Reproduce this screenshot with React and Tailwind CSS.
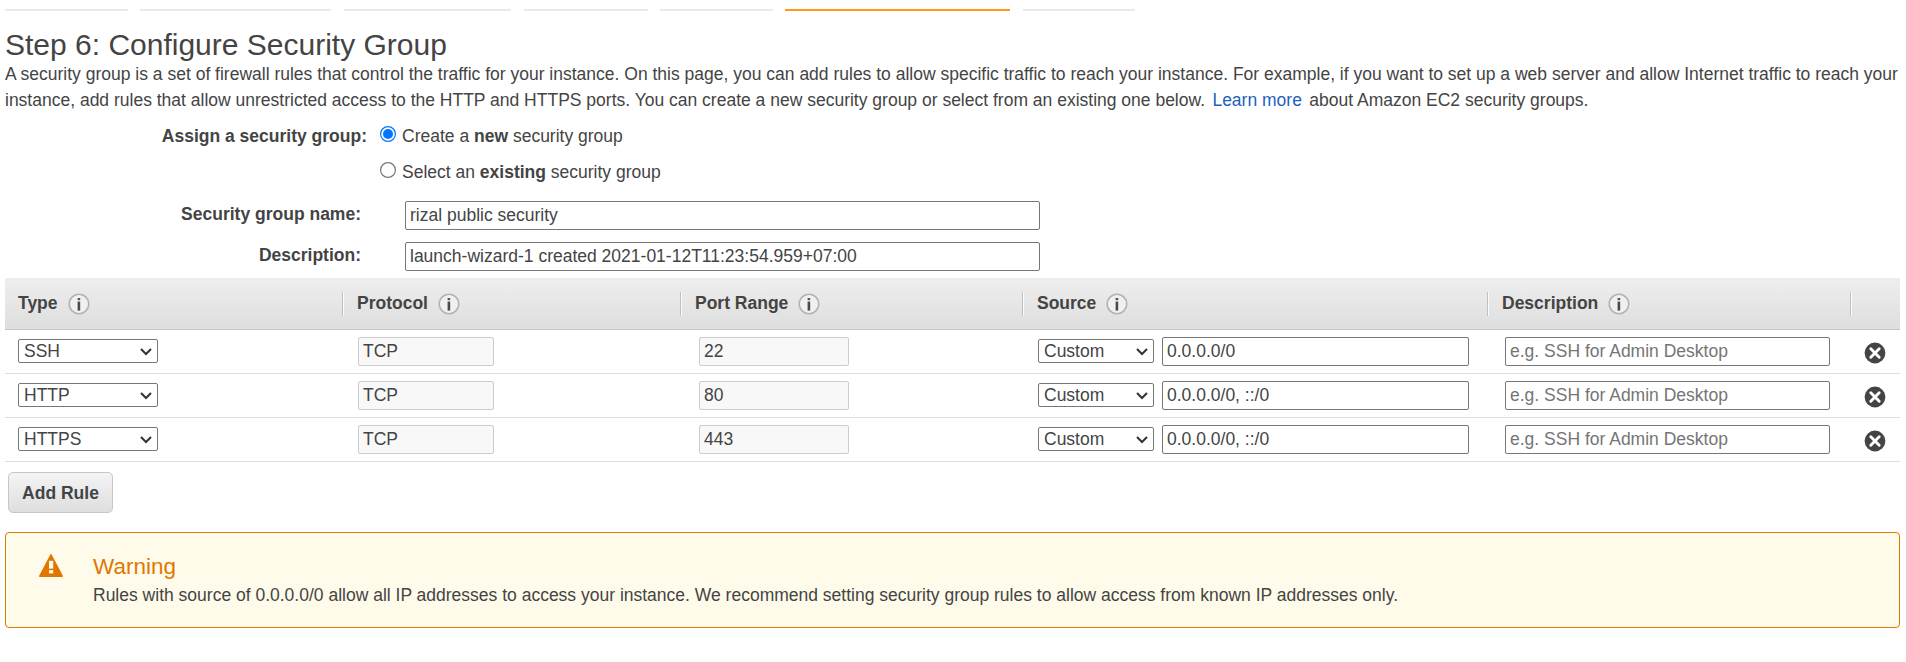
const tabs = [
  { width: 'w-[123px]', gap: 'mr-3' },
  { width: 'w-[191px]', gap: 'mr-[13px]' },
  { width: 'w-[167px]', gap: 'mr-[13px]' },
  { width: 'w-[124px]', gap: 'mr-3' },
  { width: 'w-[113px]', gap: 'mr-3' },
  { width: 'w-[225px]', gap: 'mr-[13px]', active: true },
  { width: 'w-[112px]', gap: '' },
];

const columns = [
  { label: 'Type', pad: 'pl-[13px]' },
  { label: 'Protocol', pad: 'pl-[14px]' },
  { label: 'Port Range', pad: 'pl-[14px]' },
  { label: 'Source', pad: 'pl-[14px]' },
  { label: 'Description', pad: 'pl-[14px]' },
];

const rules = [
  { type: 'SSH', protocol: 'TCP', port: '22', source: '0.0.0.0/0' },
  { type: 'HTTP', protocol: 'TCP', port: '80', source: '0.0.0.0/0, ::/0' },
  { type: 'HTTPS', protocol: 'TCP', port: '443', source: '0.0.0.0/0, ::/0' },
];

const rowGrid = 'grid grid-cols-[338px_338px_342px_465px_363px_49px]';

function InfoIcon() {
  return (
    <svg width="22" height="22" viewBox="0 0 22 22" className="shrink-0">
      <circle cx="11" cy="11" r="9.8" fill="#f0f0f0" stroke="#b3b3b3" strokeWidth="1.6" />
      <rect x="9.6" y="5" width="2.6" height="2.2" fill="#555" />
      <rect x="9.6" y="8.6" width="2.6" height="9" fill="#4a4a4a" />
    </svg>
  );
}

function RemoveIcon() {
  return (
    <svg width="22" height="22" viewBox="0 0 22 22">
      <circle cx="11" cy="11" r="10.4" fill="#444" />
      <path d="M6.8 6.8 L15.2 15.2 M15.2 6.8 L6.8 15.2" stroke="#fff" strokeWidth="2.9" strokeLinecap="round" />
    </svg>
  );
}

function WarningIcon() {
  return (
    <svg width="24" height="24" viewBox="0 0 24 24" className="shrink-0">
      <path d="M12 0.8 L23.2 22.2 H0.8 Z" fill="#e07700" stroke="#e07700" strokeWidth="1.5" strokeLinejoin="round" />
      <rect x="10" y="6.8" width="4.2" height="7.8" fill="#fffbea" />
      <rect x="10" y="16.2" width="4.2" height="3.2" fill="#fffbea" />
    </svg>
  );
}

function Select({ value, className }) {
  return (
    <div className={`relative mb-px h-6 ${className}`}>
      <select
        defaultValue={value}
        className="block h-6 w-full appearance-none rounded-[2px] border border-[#767676] bg-white pl-[5px] leading-[22px] text-[#444]"
      >
        <option>{value}</option>
      </select>
      <svg width="12" height="8" viewBox="0 0 12 8" className="pointer-events-none absolute right-[6px] top-[9px]">
        <path d="M1 1 L6 6 L11 1" fill="none" stroke="#333" strokeWidth="2" />
      </svg>
    </div>
  );
}

function Field({ className, ...props }) {
  return (
    <input
      type="text"
      className={`block h-[29px] rounded-[2px] border px-1 leading-[27px] text-[#444] placeholder:text-[#757575] ${className}`}
      {...props}
    />
  );
}

function Radio({ checked }) {
  return (
    <svg width="16" height="16" viewBox="0 0 16 16" className="shrink-0">
      <circle cx="8" cy="8" r="7.4" fill="#fff" stroke={checked ? '#0075ff' : '#767676'} strokeWidth="1.2" />
      {checked && <circle cx="8" cy="8" r="5" fill="#0075ff" />}
    </svg>
  );
}

export default function App() {
  return (
    <div className="h-[662px] w-[1906px] overflow-hidden bg-white pl-[5px] pt-[9px] font-['Liberation_Sans',Arial,sans-serif] text-[17.5px] text-[#444]">
      <div className="flex">
        {tabs.map((t, i) => (
          <div key={i} className={`h-[2px] ${t.width} ${t.gap} ${t.active ? 'bg-[#ff9919]' : 'bg-[#eaeaea]'}`} />
        ))}
      </div>

      <h1 className="mt-[15px] h-[34px] text-[30px] leading-[38px]">Step 6: Configure Security Group</h1>
      <p className="mt-[1px] whitespace-nowrap leading-[26px]">
        A security group is a set of firewall rules that control the traffic for your instance. On this page, you can add
        rules to allow specific traffic to reach your instance. For example, if you want to set up a web server and allow
        Internet traffic to reach your
        <br />
        instance, add rules that allow unrestricted access to the HTTP and HTTPS ports. You can create a new security
        group or select from an existing one below.{' '}
        <a className="mx-[2.5px] text-[#1f5fbf]">Learn more</a> about Amazon EC2 security groups.
      </p>

      <div className="mt-[3px] flex">
        <div className="w-[362px] pt-[2px] text-right font-bold leading-[36px]">Assign a security group:</div>
        <div className="ml-[13px] h-[72px]">
          <div className="flex h-9 items-center">
            <Radio checked />
            <span className="ml-1.5 pt-[4px] leading-[24px]">Create a <b>new</b> security group</span>
          </div>
          <div className="flex h-9 items-center">
            <Radio />
            <span className="ml-1.5 pt-[4px] leading-[24px]">Select an <b>existing</b> security group</span>
          </div>
        </div>
      </div>

      <div className="mt-[13px] flex">
        <label className="w-[356px] text-right font-bold leading-[27px]">Security group name:</label>
        <Field className="ml-11 w-[635px] border-[#767676]" defaultValue="rizal public security" />
      </div>
      <div className="mt-3 flex">
        <label className="w-[356px] text-right font-bold leading-[27px]">Description:</label>
        <Field className="ml-11 w-[635px] border-[#767676]" defaultValue="launch-wizard-1 created 2021-01-12T11:23:54.959+07:00" />
      </div>

      <div className="mt-[7px] w-[1895px]">
        <div className={`${rowGrid} h-[52px] border-b border-[#c4c4c4] bg-linear-to-b from-[#eeeeee] to-[#dedede]`}>
          {columns.map((c) => (
            <div key={c.label} className="flex pt-[14px]">
              <div className={`flex h-6 grow items-center border-r border-[#c0c0c0] shadow-[1px_0_0_#fafafa] ${c.pad}`}>
                <span className="pb-[2px] font-bold">{c.label}</span>
                <span className="ml-[10px]"><InfoIcon /></span>
              </div>
            </div>
          ))}
        </div>
        {rules.map((r) => (
          <div key={r.type} className={`${rowGrid} h-11 items-center border-b border-[#dedede]`}>
            <div className="pl-[13px]"><Select value={r.type} className="w-[140px]" /></div>
            <div className="pl-[15px]"><Field readOnly defaultValue={r.protocol} className="w-[136px] border-[#ccc] bg-[#f8f8f8]" /></div>
            <div className="pl-[18px]"><Field readOnly defaultValue={r.port} className="w-[150px] border-[#ccc] bg-[#f8f8f8]" /></div>
            <div className="flex items-center pl-[15px]">
              <Select value="Custom" className="w-[116px]" />
              <Field defaultValue={r.source} className="ml-2 w-[307px] border-[#767676]" />
            </div>
            <div className="pl-[17px]"><Field placeholder="e.g. SSH for Admin Desktop" className="w-[325px] border-[#767676]" /></div>
            <div className="pl-[13px] pt-[2px]"><RemoveIcon /></div>
          </div>
        ))}
      </div>

      <button className="ml-[3px] mt-[10px] block h-[41px] w-[105px] rounded-[5px] border border-[#c6c6c6] bg-linear-to-b from-[#f4f4f4] to-[#dedede] pt-[2px] font-bold">
        Add Rule
      </button>

      <div className="mt-[19px] flex h-24 w-[1895px] rounded-[4px] border border-[#e07700] bg-[#fffbea] pl-[33px] pt-[21px]">
        <WarningIcon />
        <div className="ml-[30px]">
          <div className="text-[22.5px] leading-[25px] text-[#e07700]">Warning</div>
          <div className="mt-[3px] leading-[26px]">
            Rules with source of 0.0.0.0/0 allow all IP addresses to access your instance. We recommend setting security
            group rules to allow access from known IP addresses only.
          </div>
        </div>
      </div>
    </div>
  );
}
